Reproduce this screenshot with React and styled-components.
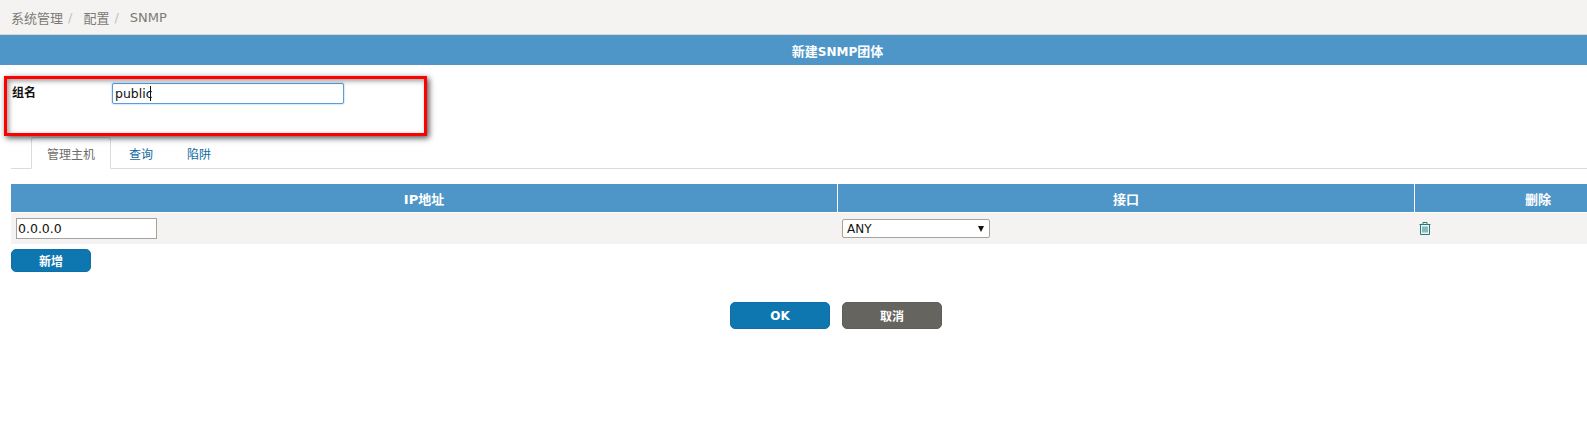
import styled, { createGlobalStyle } from "styled-components";

const GlobalStyle = createGlobalStyle`
    html, body {
        margin: 0;
        padding: 0;
        background: #fff;
        overflow: hidden;
    }
    body {
        font-family: "DejaVu Sans", "Noto Sans CJK SC", sans-serif;
        font-size: 12px;
    }
`;

const Page = styled.div`
    position: relative;
    width: 1587px;
    height: 435px;
    overflow: hidden;
`;
const Breadcrumb = styled.div`
    height: 34px;
    box-sizing: content-box;
    background: #f5f3f1;
    border-bottom: 1px solid #ddd6cf;
    display: flex;
    align-items: center;
    padding-left: 11px;
    font-size: 13px;
    color: #7c7a76;
`;
const Crumb = styled.span``;
const Slash = styled.span`
    color: #c4c0bb;
    margin: 0 11px 0 5px;
`;
const TitleBar = styled.div`
    height: 30px;
    padding-left: 88px;
    background: #4e96c8;
    color: #fff;
    font-weight: bold;
    font-size: 13px;
    display: flex;
    align-items: center;
    justify-content: center;
`;
const TitleText = styled.div``;
const TitleLatin = styled.span`
    font-size: 12px;
`;
const Content = styled.div`
    padding: 0 0 0 11px;
`;
const FormRow = styled.div`
    display: flex;
    align-items: flex-start;
    height: 73px;
    padding-top: 18px;
    box-sizing: border-box;
`;
const FieldLabel = styled.label`
    width: 100px;
    margin-left: 1px;
    font-size: 12px;
    font-weight: bold;
    color: #111;
    line-height: 20px;
`;
const InputWrap = styled.div`
    position: relative;
`;
const NameInput = styled.input`
    display: block;
    width: 232px;
    height: 21px;
    box-sizing: border-box;
    padding: 0 1px 0 2px;
    border: 1px solid #5a9fdb;
    border-radius: 2px;
    box-shadow: 0 0 2px #7db5e6;
    outline: none;
    font-family: inherit;
    font-size: 12.5px;
    color: #111;
`;
const TextCaret = styled.span`
    position: absolute;
    left: 38px;
    top: 3px;
    width: 1px;
    height: 15px;
    background: #111;
`;
const Annotation = styled.div`
    position: absolute;
    left: 4px;
    top: 76px;
    width: 423px;
    height: 60px;
    box-sizing: border-box;
    border: 3px solid #ff0000;
    box-shadow: 2px 2px 6px rgba(0, 0, 0, 0.7), inset 2px 2px 5px rgba(0, 0, 0, 0.4);
    pointer-events: none;
`;
const Tabs = styled.div`
    display: flex;
    height: 32px;
    box-sizing: border-box;
    border-bottom: 1px solid #dcdcdc;
    padding-left: 20px;
    margin-top: -1px;
`;
const Tab = styled.div`
    height: ${(p) => (p.$active ? 32 : 31)}px;
    box-sizing: border-box;
    padding: 0 ${(p) => (p.$active ? 15 : 14)}px;
    margin-right: ${(p) => (p.$active ? 3 : 4)}px;
    display: flex;
    align-items: center;
    font-size: 12px;
    color: ${(p) => (p.$active ? "#6f6d69" : "#116a9e")};
    background: #fff;
    border: 1px solid ${(p) => (p.$active ? "#dcdcdc" : "transparent")};
    border-bottom: ${(p) => (p.$active ? "1px solid #fff" : "none")};
    border-radius: 3px 3px 0 0;
`;
const Table = styled.div`
    margin-top: 15px;
    width: 1650px;
`;
const TableRow = styled.div`
    display: grid;
    grid-template-columns: 826px 576px 1fr;
    column-gap: 1px;
`;
const HeadCell = styled.div`
    height: 28px;
    background: #4e96c8;
    color: #fff;
    font-weight: bold;
    font-size: 13px;
    display: flex;
    align-items: center;
    justify-content: center;
`;
const BodyRow = styled(TableRow)`
    margin-top: 1px;
    background: #f5f3f1;
    height: 31px;
`;
const BodyCell = styled.div`
    display: flex;
    align-items: center;
    padding-left: ${(p) => p.$pad}px;
`;
const IpInput = styled.input`
    width: 141px;
    height: 21px;
    box-sizing: border-box;
    padding: 0 1px;
    border: 1px solid #a8a29c;
    background: #fff;
    font-family: inherit;
    font-size: 12.5px;
    color: #111;
    outline: none;
`;
const FakeSelect = styled.div`
    width: 148px;
    height: 19px;
    box-sizing: border-box;
    padding: 0 4px;
    border: 1px solid #a8a29c;
    border-radius: 2px;
    background: #fff;
    display: flex;
    align-items: center;
    justify-content: space-between;
    font-size: 12px;
    color: #111;
`;
const Caret = styled.span`
    width: 0;
    height: 0;
    margin-right: 1px;
    border-left: 3px solid transparent;
    border-right: 3px solid transparent;
    border-top: 6px solid #111;
`;
const Button = styled.button`
    box-sizing: border-box;
    width: ${(p) => p.$w}px;
    height: ${(p) => p.$h}px;
    border: 1px solid ${(p) => (p.$muted ? "#5f5d58" : "#0f6fa8")};
    border-radius: 5px;
    background: ${(p) => (p.$muted ? "#66645e" : "#0f77b0")};
    color: #fff;
    font-family: inherit;
    font-weight: bold;
    font-size: 12px;
    padding: 0;
`;
const AddRow = styled.div`
    margin-top: 5px;
`;
const Actions = styled.div`
    margin-top: 30px;
    margin-left: -11px;
    padding-left: 730px;
    display: flex;
    gap: 12px;
`;

function TrashIcon() {
    return (
        <svg width="12" height="13" viewBox="0 0 12 13" fill="none" stroke="#1c7f7f" strokeWidth="1">
            <path d="M0.5 2.5h11" />
            <path d="M4 2.5v-2h4v2" />
            <path d="M1.5 2.5v10h9v-10" />
            <path d="M4 4.5v6M6 4.5v6M8 4.5v6" />
        </svg>
    );
}

export default function App() {
    return (
        <Page>
            <GlobalStyle />
            <Breadcrumb>
                <Crumb>系统管理</Crumb>
                <Slash>/</Slash>
                <Crumb>配置</Crumb>
                <Slash>/</Slash>
                <Crumb>SNMP</Crumb>
            </Breadcrumb>
            <TitleBar>
                <TitleText>新建<TitleLatin>SNMP</TitleLatin>团体</TitleText>
            </TitleBar>
            <Content>
                <FormRow>
                    <FieldLabel>组名</FieldLabel>
                    <InputWrap>
                        <NameInput defaultValue="public" />
                        <TextCaret />
                    </InputWrap>
                </FormRow>
                <Tabs>
                    <Tab $active>管理主机</Tab>
                    <Tab>查询</Tab>
                    <Tab>陷阱</Tab>
                </Tabs>
                <Table>
                    <TableRow>
                        <HeadCell>IP地址</HeadCell>
                        <HeadCell>接口</HeadCell>
                        <HeadCell>删除</HeadCell>
                    </TableRow>
                    <BodyRow>
                        <BodyCell $pad={5}>
                            <IpInput defaultValue="0.0.0.0" />
                        </BodyCell>
                        <BodyCell $pad={4}>
                            <FakeSelect>
                                ANY
                                <Caret />
                            </FakeSelect>
                        </BodyCell>
                        <BodyCell $pad={4}>
                            <TrashIcon />
                        </BodyCell>
                    </BodyRow>
                </Table>
                <AddRow>
                    <Button $w={80} $h={23}>新增</Button>
                </AddRow>
                <Actions>
                    <Button $w={100} $h={27}>OK</Button>
                    <Button $w={100} $h={27} $muted>取消</Button>
                </Actions>
            </Content>
            <Annotation />
        </Page>
    );
}
